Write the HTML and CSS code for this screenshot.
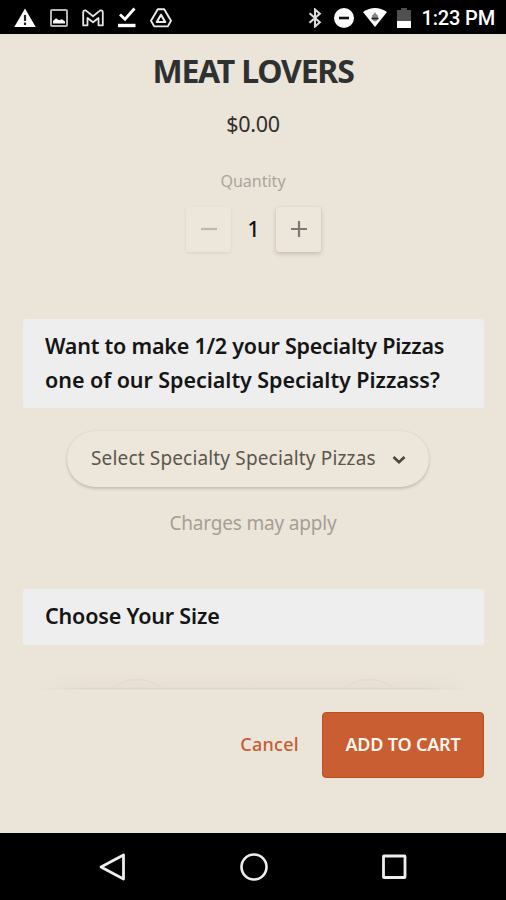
FILE: index.html
```html
<!DOCTYPE html>
<html lang="en">
<head>
<meta charset="utf-8">
<title>Meat Lovers</title>
<link rel="stylesheet" href="styles.css">
</head>
<body>
<header class="status">
  <div class="status-left">
    <svg width="22" height="20" viewBox="0 0 22 20"><path d="M11 0.500 21.700 19H.3z" fill="#fff"/><path d="M11 7v6M11 14.500v2.400" stroke="#222" stroke-width="2.200"/></svg>
    <svg width="18" height="18" viewBox="0 0 18 18"><rect x="1" y="1" width="16" height="16" rx="1" fill="none" stroke="#b4b4b4" stroke-width="2"/><path d="M3 14.500V12l3-2.700 3 2 3-1 3 2.200v2z" fill="#fff"/></svg>
    <svg width="22" height="18" viewBox="0 0 22 18"><path d="M1.200 16.300V3.500Q1.200 1 3.700 1.400L11 7.200l7.300-5.800q2.500-.4 2.500 2.100v12.800h-4.300V9L11 13.300 5.500 9v7.300z" fill="none" stroke="#e6e6e6" stroke-width="1.800" stroke-linejoin="round"/></svg>
    <svg width="18" height="21" viewBox="0 0 18 21"><path d="m2 7.500 5 4.700L16.500 1.500" fill="none" stroke="#fff" stroke-width="2.800"/><path d="M0 18.500h17.500" stroke="#fff" stroke-width="3.400"/></svg>
    <svg width="22" height="20" viewBox="0 0 22 20"><path d="M7.800 1.200h6.400L21 12.800l-3.200 5.600H4.200L1 12.800z" fill="none" stroke="#ececec" stroke-width="1.900" stroke-linejoin="round"/><path d="m11 6.800 4.200 7.200H6.800z" fill="none" stroke="#ececec" stroke-width="2.200" stroke-linejoin="round"/></svg>
  </div>
  <div class="status-right">
    <svg class="bt" width="14" height="20" viewBox="0 0 14 20"><path d="m1.500 5.300 10.300 9L7 18.500v-17l4.800 4.200-10.300 9" fill="none" stroke="#ddd" stroke-width="2.100"/></svg>
    <svg class="dnd" width="20" height="20" viewBox="0 0 20 20"><circle cx="10" cy="10" r="10" fill="#fff"/><path d="M5 10h10" stroke="#111" stroke-width="2.600"/></svg>
    <svg class="wifi" width="24" height="19" viewBox="0 0 24 19"><path d="M0 4Q12-4 24 4L12 19z" fill="#fff"/><path d="M12 4q-1 2-3 3.500-1.200 5 3 6 4.200-1 3-6-2-1.500-3-3.500z" fill="#888"/><path d="M8.500 10.500h7" stroke="#222" stroke-width="1.600"/></svg>
    <svg class="bat" width="14" height="20" viewBox="0 0 14 20"><path d="M0 2h4V0h6v2h4v18H0z" fill="#505050"/><path d="M0 13h14v7H0z" fill="#fff"/></svg>
    <span class="time">1:23 PM</span>
  </div>
</header>
<main class="content">
  <h1 class="title">MEAT LOVERS</h1>
  <div class="price">$0.00</div>
  <div class="qty-label">Quantity</div>
  <div class="stepper">
    <button class="step off"><svg width="18" height="18" viewBox="0 0 18 18"><path d="M1 9h16" stroke="#bdb7ad" stroke-width="2.200"/></svg></button>
    <span class="count">1</span>
    <button class="step"><svg width="18" height="18" viewBox="0 0 18 18"><path d="M1 9h16M9 1v16" stroke="#7c7872" stroke-width="2.200"/></svg></button>
  </div>
  <h2 class="band half"><span class="l1">Want to make 1/2 your Specialty Pizzas</span><span class="l2">one of our Specialty Specialty Pizzass?</span></h2>
  <button class="select"><span>Select Specialty Specialty Pizzas</span><svg width="14" height="10" viewBox="0 0 14 10"><path d="m1.500 2 5.500 5.300L12.500 2" fill="none" stroke="#4a463f" stroke-width="2.600"/></svg></button>
  <div class="note">Charges may apply</div>
  <h2 class="band size"><span class="l3">Choose Your Size</span></h2>
  <div class="peek"><i class="arc"></i><i class="arc"></i></div>
</main>
<footer class="actions">
  <button class="cancel">Cancel</button>
  <button class="add">ADD TO CART</button>
</footer>
<nav class="nav">
  <svg width="28" height="30" viewBox="0 0 28 30"><path d="M2 15 24.500 3v24z" fill="none" stroke="#eee" stroke-width="2.800" stroke-linejoin="round"/></svg>
  <svg width="28" height="30" viewBox="0 0 28 30"><circle cx="14" cy="15" r="12.500" fill="none" stroke="#eee" stroke-width="2.600"/></svg>
  <svg width="28" height="30" viewBox="0 0 28 30"><rect x="3.500" y="4" width="21.500" height="21.500" rx=".5" fill="none" stroke="#eee" stroke-width="2.800"/></svg>
</nav>
</body>
</html>
```
FILE: styles.css
```css
* { box-sizing: border-box; }
body { margin: 0; width: 506px; height: 900px; overflow: hidden; display: flex; flex-direction: column; background: #ebe4d8; font-family: "Noto Sans", sans-serif; color: #302f2d; }
button { border: 0; padding: 0; margin: 0; background: none; font: inherit; white-space: nowrap; }
h1, h2 { margin: 0; white-space: nowrap; }
svg { display: block; flex: none; }
.status { height: 34px; flex: none; background: #000; display: flex; justify-content: space-between; padding: 1px 11px 0 14px; }
.status-left, .status-right { display: flex; align-items: center; }
.status-left { gap: 14px; }
.dnd { margin-left: 12px; }
.wifi { margin-left: 9px; }
.bat { margin-left: 10px; }
.time { margin-left: 10px; color: #fff; font: 500 20px/34px Roboto, sans-serif; letter-spacing: -.15px; white-space: nowrap; }
.content { height: 656px; flex: none; overflow: hidden; display: flex; flex-direction: column; align-items: center; }
.title { margin-top: 16px; font-size: 32px; line-height: 42px; font-weight: 700; letter-spacing: -1.200px; color: #2f3130; }
.price { margin-top: 17px; font-size: 21.500px; line-height: 30px; letter-spacing: -.3px; }
.qty-label { margin-top: 30px; font-size: 16px; line-height: 24px; color: #aaa59b; }
.stepper { margin-top: 14px; padding-left: 1px; display: flex; align-items: center; }
.step { width: 45px; height: 45px; display: flex; align-items: center; justify-content: center; border-radius: 3px; background: #ede6db; box-shadow: 0 2px 4px rgba(90,70,45,.22), 0 0 2px rgba(90,70,45,.08); }
.step svg { margin-top: -1px; }
.step.off { box-shadow: 0 1px 3px rgba(90,70,45,.12); }
.count { width: 45px; text-align: center; font-size: 21px; line-height: 45px; font-weight: 500; color: #111; }
.band { width: 461px; padding: 10px 22.500px 0; background: #eeeeee; border-radius: 3px; color: #151515; font-size: 21.500px; line-height: 34px; font-weight: 600; }
.band span { display: block; width: max-content; }
.l1 { letter-spacing: -.22px; }
.l2 { letter-spacing: -.05px; }
.l3 { letter-spacing: -.18px; }
.half { margin-top: 67px; height: 89px; }
.size { margin-top: 53px; height: 56px; }
.select { margin: 23px 10px 0 0; width: 362px; height: 56px; padding: 0 23px 2px 24px; display: flex; align-items: center; justify-content: space-between; border-radius: 28px; background: #ede6da; box-shadow: 0 2px 3px rgba(90,70,45,.22), 0 0 2px rgba(90,70,45,.1); font-size: 19px; letter-spacing: .16px; color: #5b564e; }
.select svg { margin-top: 3px; }
.note { margin-top: 23px; font-size: 19px; line-height: 26px; letter-spacing: -.18px; color: #a49f96; }
.peek { margin-top: 27px; width: 440px; height: 18px; padding: 7px 64px 0; flex: none; display: flex; justify-content: space-between; overflow: hidden; background: linear-gradient(90deg, #ebe4d8, transparent 12%, transparent 88%, #ebe4d8), linear-gradient(#ebe4d8, #e7dfd3 85%, #ded5c8 90%, #e8e1d5); }
.arc { width: 80px; height: 80px; flex: none; border: 1px solid #e2d9cc; border-radius: 50%; }
.actions { height: 143px; flex: none; display: flex; justify-content: flex-end; align-items: flex-start; padding: 22px 22px 0 0; }
.cancel { height: 66px; padding-bottom: 2px; color: #c65c34; font-size: 18px; font-weight: 500; letter-spacing: .3px; margin-right: 23px; }
.add { width: 162px; height: 66px; padding-bottom: 2px; border: 1px solid #bd5119; border-radius: 4px; background: #c95e33; color: #fff7ef; font-size: 18px; font-weight: 600; letter-spacing: -.2px; }
.nav { flex: 1; background: #000; display: flex; justify-content: space-between; align-items: center; padding: 0 98px 0 99px; }
```
